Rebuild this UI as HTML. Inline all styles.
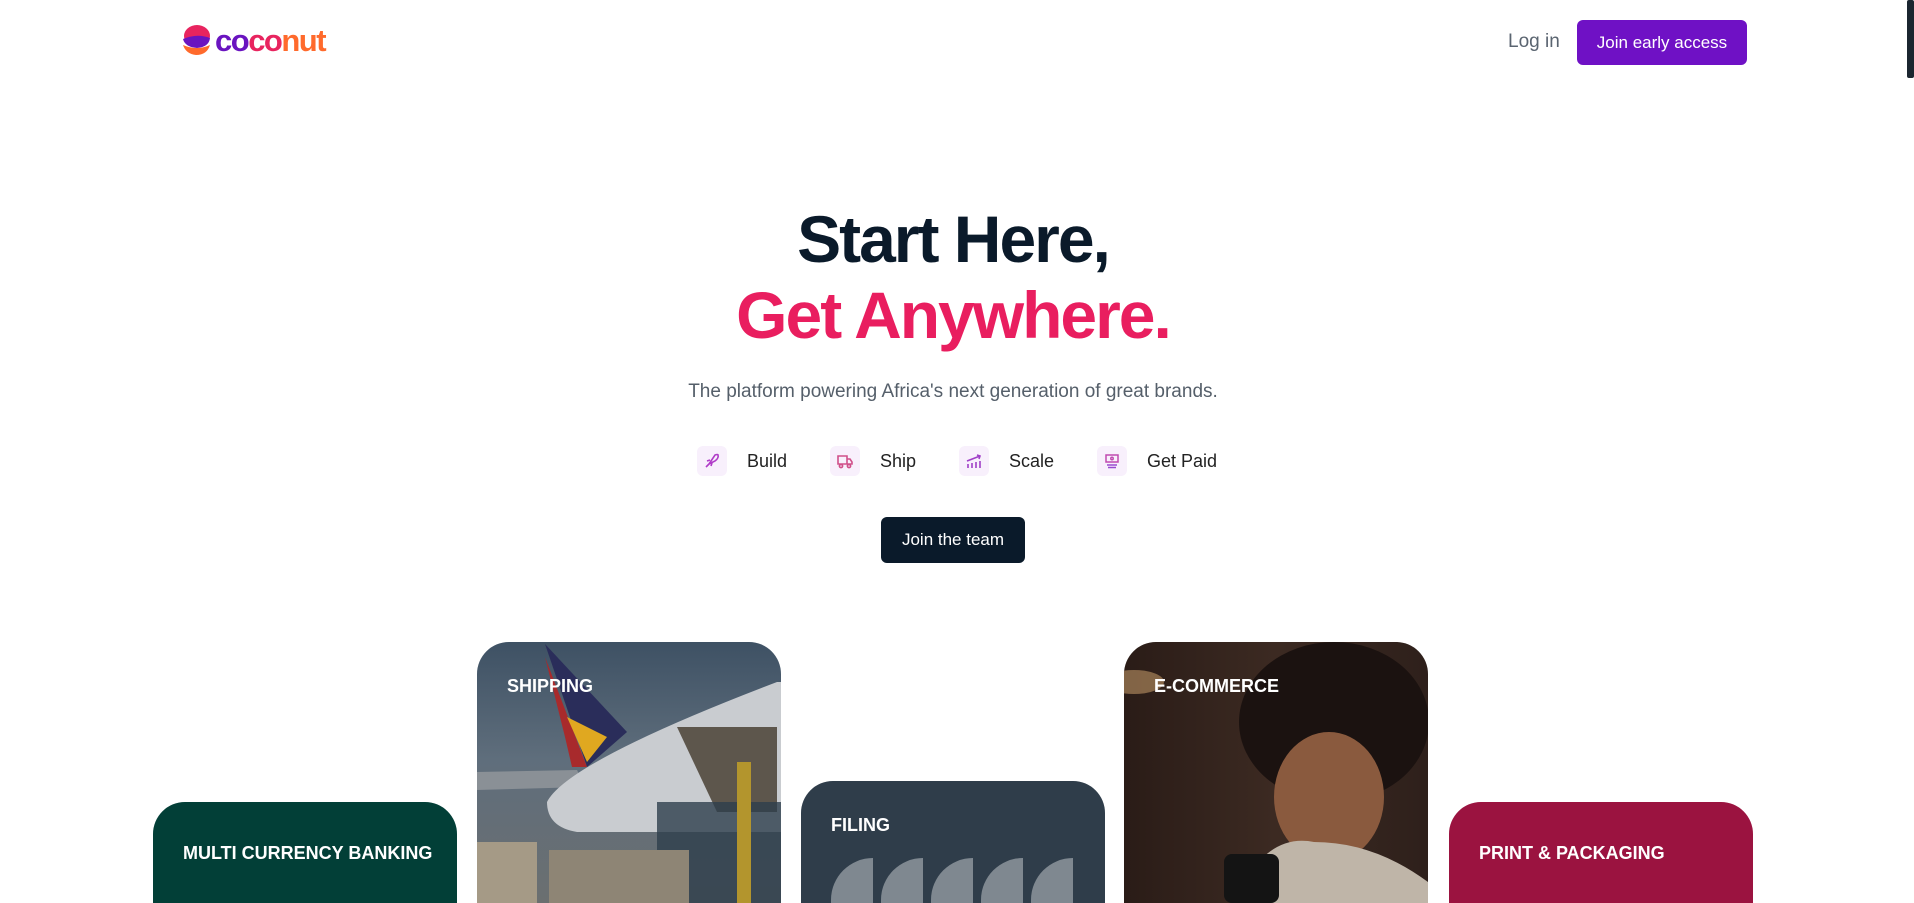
<!DOCTYPE html>
<html style="overflow:hidden;height:903px"><head><meta charset="utf-8"><style>
*{margin:0;padding:0;box-sizing:border-box}
body{width:1914px;height:903px;overflow:hidden;background:#fff;font-family:"Liberation Sans",sans-serif;position:relative;color:#0a1a2a}
.abs{position:absolute}
.sb{position:absolute;right:0;top:0;width:7px;height:78px;background:#1b2630;border-radius:2px}
.logo{left:179px;top:23px;display:flex;align-items:center}
.logo span{font-weight:bold;font-size:31px;letter-spacing:-1.5px;line-height:1}
.login{left:1508px;top:31px;font-size:19px;color:#5a6470}
.jea{left:1577px;top:20px;width:170px;height:45px;background:#6f11c5;color:#fff;border-radius:6px;font-size:17px;display:flex;align-items:center;justify-content:center}
h1{position:absolute;left:0;width:1906px;text-align:center;font-weight:bold;font-size:66px;letter-spacing:-2px;line-height:76px;top:201px}
.sub{left:0;width:1906px;text-align:center;top:381px;font-size:19px;color:#555f6a}
.feat{top:446px;display:flex;align-items:center;font-size:18px;color:#222}
.ic{width:30px;height:30px;background:#f8f0fc;border-radius:6px;display:flex;align-items:center;justify-content:center;margin-right:20px}
.jt{left:881px;top:517px;width:144px;height:46px;background:#0a1a2a;color:#fff;border-radius:6px;font-size:17px;display:flex;align-items:center;justify-content:center}
.card{position:absolute;width:304px;border-radius:32px 32px 0 0;overflow:hidden}
.card b{position:absolute;left:30px;top:34px;color:#fff;font-size:18px;z-index:2}
</style></head><body>
<div class="sb"></div>
<div class="abs logo">
<svg width="34" height="34" viewBox="0 0 34 34"><ellipse cx="18" cy="13" rx="13" ry="11" fill="#e8245f"/><path d="M4 16 Q18 10 31 15 Q30 24 18 25 Q6 24 4 16Z" fill="#6a14c0"/><path d="M4 22 Q18 28 31 22 Q28 32 17 32 Q7 31 4 22Z" fill="#ff6a2c"/></svg>
<span style="color:#6a14c0;margin-left:2px">co</span><span style="color:#e8245f">co</span><span style="color:#ff6a2c">nut</span>
</div>
<div class="abs login">Log in</div>
<div class="abs jea">Join early access</div>
<h1><span style="color:#0a1a2a">Start Here,</span><br><span style="color:#e91e5f">Get Anywhere.</span></h1>
<div class="abs sub">The platform powering Africa's next generation of great brands.</div>
<div class="abs feat" style="left:697px"><div class="ic"><svg width="18" height="18" viewBox="0 0 18 18" fill="none" stroke="#b03cc8" stroke-width="1.6"><path d="M6 12 L12 3 Q15 2 15 3 Q16 6 12 9Z M4 9 L7 8 M9 11 L8 14 M3 15 L6 12"/></svg></div>Build</div>
<div class="abs feat" style="left:830px"><div class="ic"><svg width="18" height="18" viewBox="0 0 18 18" fill="none" stroke="#d0508a" stroke-width="1.6"><path d="M2 4h9v8H2z M11 7h3l2 3v2h-5"/><circle cx="5" cy="14" r="1.6"/><circle cx="13" cy="14" r="1.6"/></svg></div>Ship</div>
<div class="abs feat" style="left:959px"><div class="ic"><svg width="18" height="18" viewBox="0 0 18 18" fill="none" stroke="#c84a90" stroke-width="1.6"><path d="M3 16v-4 M7 16v-5 M11 16v-6 M15 16v-7 M2 9 L15 4 M12 3 L15 4 L14 7" stroke="#a040c8"/></svg></div>Scale</div>
<div class="abs feat" style="left:1097px"><div class="ic"><svg width="18" height="18" viewBox="0 0 18 18" fill="none" stroke="#c04ab0" stroke-width="1.5"><rect x="3" y="3" width="12" height="7"/><circle cx="9" cy="6.5" r="1.2"/><path d="M4 13h10 M5 15.5h8" stroke="#9a4ad0"/></svg></div>Get Paid</div>
<div class="abs jt">Join the team</div>

<div class="card" style="left:153px;top:802px;height:101px;background:#023f37"><b style="top:41px">MULTI CURRENCY BANKING</b></div>
<div class="card" style="left:477px;top:642px;height:261px;background:linear-gradient(180deg,#3e5164 0%,#5f6e7c 45%,#6b6f70 100%)">
<svg class="abs" style="left:0;top:0" width="304" height="261" viewBox="0 0 304 261">
<path d="M0 130 L100 128 L108 145 L0 148Z" fill="#8a9096"/>
<path d="M70 160 Q90 120 300 40 L304 40 L304 190 L100 190 Q70 185 70 160Z" fill="#c9ccd0"/>
<path d="M68 2 L150 90 L110 125 Z" fill="#2a2d5a"/>
<path d="M68 15 L88 95 L95 125 L110 125 Z" fill="#a82a2c"/>
<path d="M90 75 L130 95 L110 120Z" fill="#e0a820"/>
<path d="M200 85 L300 85 L300 170 L240 170Z" fill="#5d564c"/>
<path d="M180 160 L304 160 L304 261 L180 261Z" fill="#2e3e4c" opacity=".8"/>
<rect x="0" y="200" width="60" height="61" fill="#a59a86"/>
<rect x="72" y="208" width="140" height="53" fill="#8e8575"/>
<rect x="260" y="120" width="14" height="141" fill="#b3952d"/>
</svg><b>SHIPPING</b></div>
<div class="card" style="left:801px;top:781px;height:122px;background:#2f3d4a"><b>FILING</b>
<svg class="abs" style="left:30px;top:77px" width="250" height="60"><g fill="#7f8890"><path d="M42 0 A42 42 0 0 0 0 42 V60 H42Z"/><path d="M92 0 A42 42 0 0 0 50 42 V60 H92Z"/><path d="M142 0 A42 42 0 0 0 100 42 V60 H142Z"/><path d="M192 0 A42 42 0 0 0 150 42 V60 H192Z"/><path d="M242 0 A42 42 0 0 0 200 42 V60 H242Z"/></g></svg></div>
<div class="card" style="left:1124px;top:642px;height:261px;background:linear-gradient(90deg,#2a1c17,#3c2a22 50%,#2e201b)">
<svg class="abs" style="left:0;top:0" width="304" height="261" viewBox="0 0 304 261">
<ellipse cx="10" cy="40" rx="30" ry="12" fill="#a8835a" opacity=".7"/>
<ellipse cx="210" cy="80" rx="95" ry="80" fill="#1b1210"/>
<ellipse cx="205" cy="155" rx="55" ry="65" fill="#8a5a3e"/>
<path d="M110 261 Q140 190 190 200 Q250 200 304 240 L304 261Z" fill="#bfb5a8"/>
<rect x="100" y="212" width="55" height="49" rx="8" fill="#141414"/>
</svg><b>E-COMMERCE</b></div>
<div class="card" style="left:1449px;top:802px;height:101px;background:#9b1340"><b style="top:41px">PRINT &amp; PACKAGING</b></div>
</body></html>
